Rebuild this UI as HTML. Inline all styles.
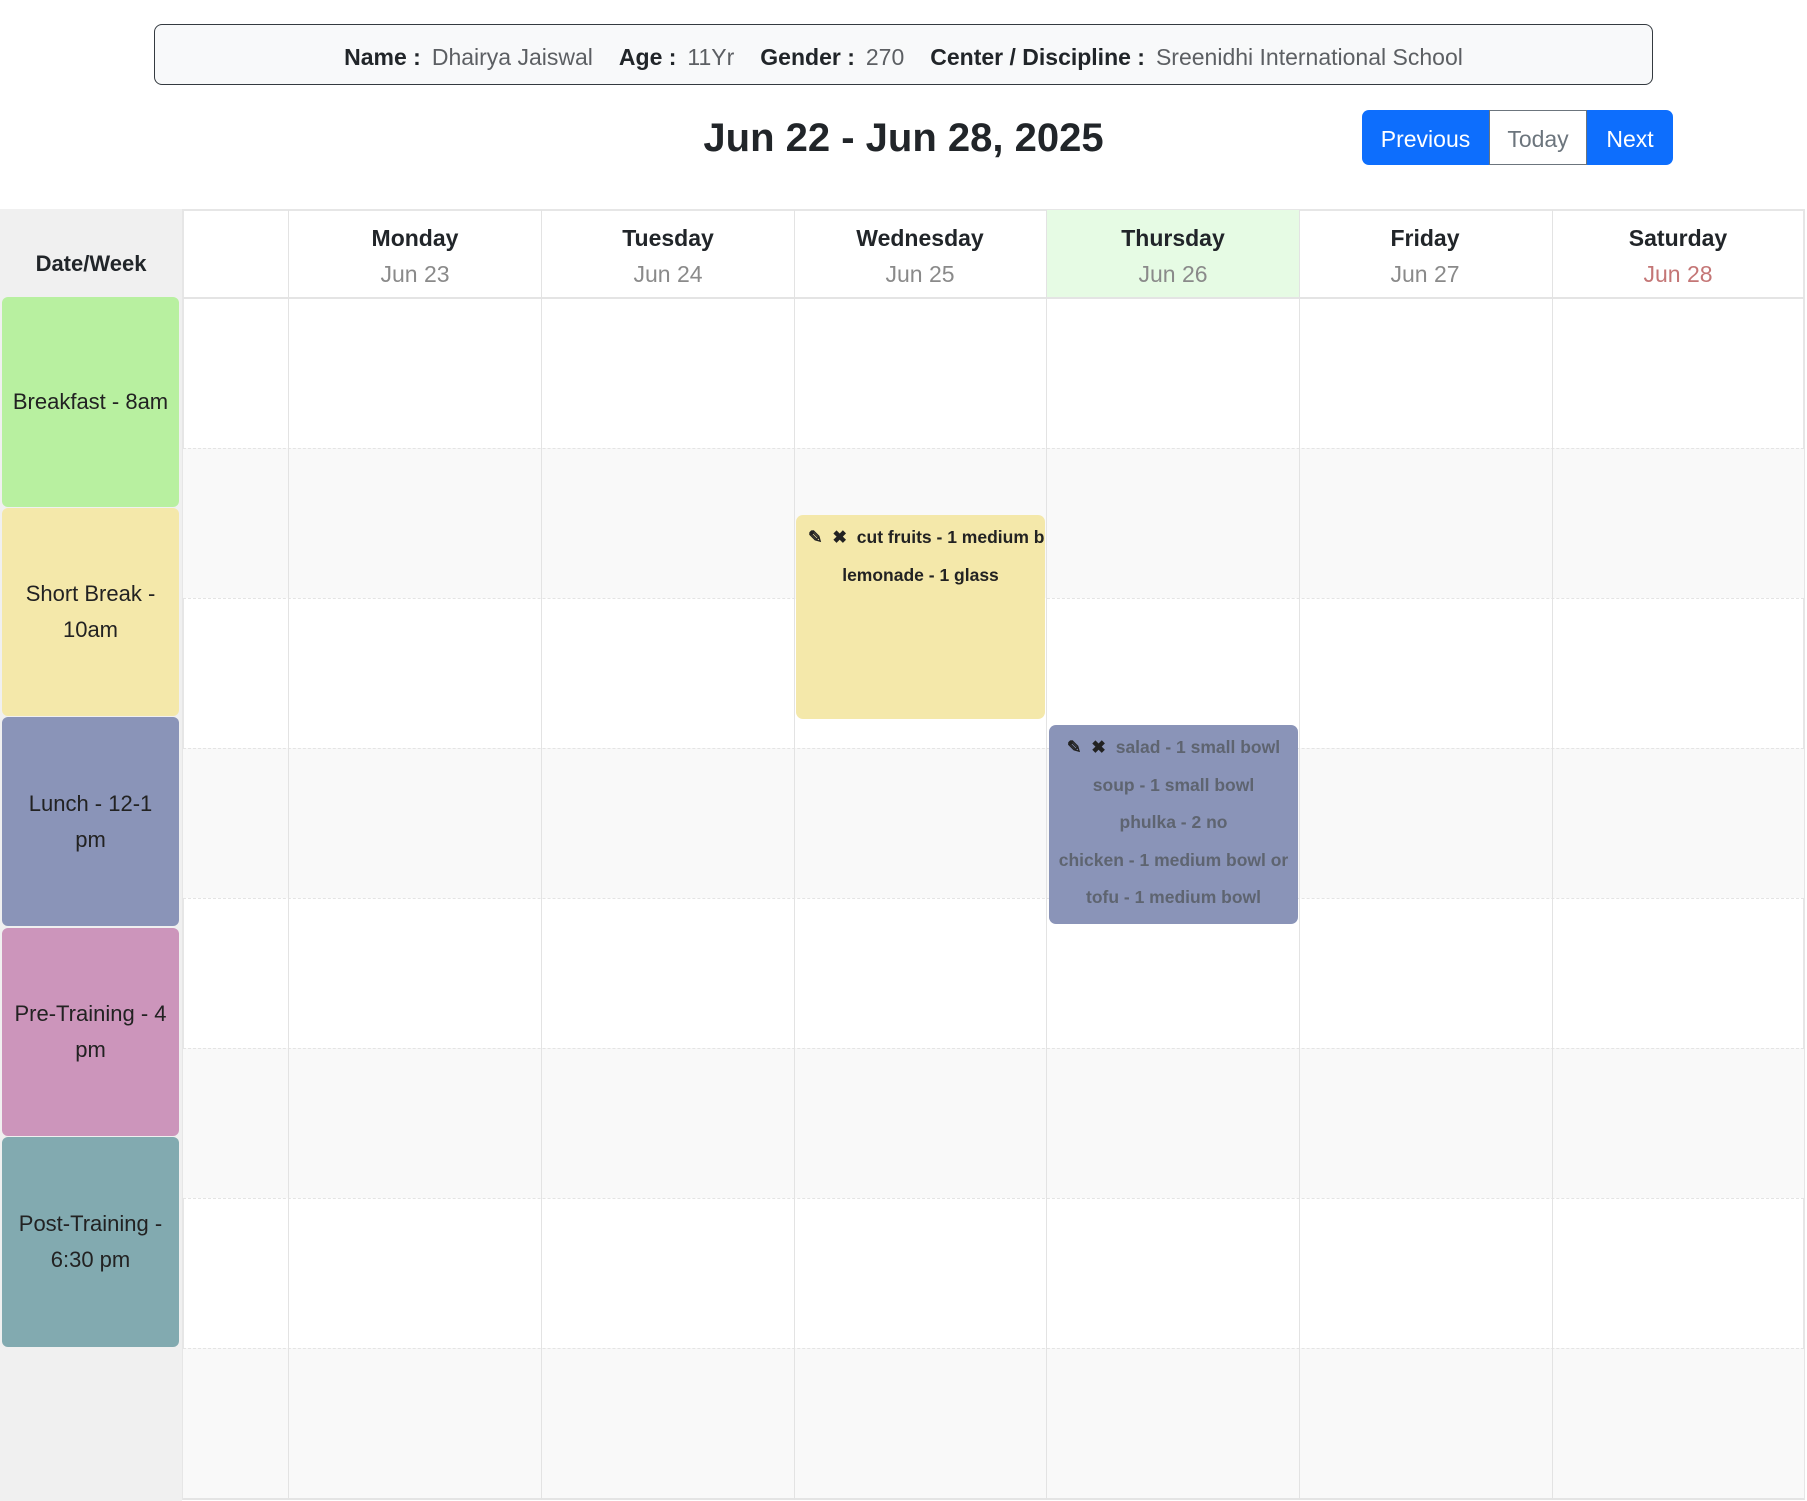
<!DOCTYPE html>
<html><head><meta charset="utf-8"><style>
*{box-sizing:border-box;margin:0;padding:0}
body{width:1807px;height:1501px;background:#fff;font-family:"Liberation Sans",sans-serif;color:#212529;position:relative;overflow:hidden}
.abs{position:absolute}
.info{left:154px;top:24px;width:1499px;height:61px;border:1.5px solid #343a40;border-radius:8px;background:#f8f9fa;display:flex;align-items:center;justify-content:center;font-size:23px;white-space:nowrap;padding-top:5px}
.info b{font-weight:600;color:#212529;margin-left:26px}
.info b:first-child{margin-left:0}
.info span{color:#5c5f63;margin-left:11px}
.title{left:0;width:1807px;top:116px;text-align:center;font-size:40px;font-weight:600;color:#212529}
.btn{top:110px;height:55px;font-size:23px;display:flex;align-items:center;justify-content:center;color:#fff;background:#0d6efd;padding-top:4px}
.col{left:0;top:209px;width:182px;height:1292px;background:#f0f0f0}
.grid{left:182px;top:209px;width:1623px;height:1291px;border:2px solid #e6e6e6;border-bottom:2px solid #e4e4e4}
.vl{top:210px;width:1px;height:1290px;background:#e3e3e3}
.row{left:183px;width:1621px;height:150px;border-top:1px dashed #e4e4e4}
.gray{background:#f9f9f9}
.hd{top:210px;height:88px;width:252px;text-align:center}
.hd .d{font-weight:bold;font-size:23px;margin-top:15px}
.hd .t{font-size:23px;color:#8a8a8a;margin-top:9px}
.lab{left:2px;width:177px;border-radius:6px;display:flex;align-items:center;justify-content:center;text-align:center;font-size:22px;line-height:36px;color:#222;padding:0 4px}
.ev{border-radius:7px;font-size:17.5px;font-weight:bold;text-align:center;overflow:hidden;white-space:nowrap}
.ev div{height:37.5px;line-height:38px}
</style></head><body>
<div class="abs info"><b>Name :</b><span>Dhairya Jaiswal</span><b>Age :</b><span>11Yr</span><b>Gender :</b><span>270</span><b>Center / Discipline :</b><span>Sreenidhi International School</span></div>
<div class="abs title">Jun 22 - Jun 28, 2025</div>
<div class="abs btn" style="left:1362px;width:127px;border-radius:7px 0 0 7px">Previous</div>
<div class="abs btn" style="left:1489px;width:98px;background:#fff;color:#6c757d;border:1px solid #6c757d">Today</div>
<div class="abs btn" style="left:1587px;width:86px;border-radius:0 7px 7px 0">Next</div>

<div class="abs col"></div>
<div class="abs grid"></div>
<div class="abs" style="left:1046px;top:210px;width:253px;height:88px;background:#e6fbe4"></div>
<div class="abs" style="left:183px;top:297px;width:1621px;height:2px;background:#e4e4e4"></div>
<div class="abs row" style="top:298px;border-top:none"></div>
<div class="abs row gray" style="top:448px"></div>
<div class="abs row" style="top:598px"></div>
<div class="abs row gray" style="top:748px"></div>
<div class="abs row" style="top:898px"></div>
<div class="abs row gray" style="top:1048px"></div>
<div class="abs row" style="top:1198px"></div>
<div class="abs row gray" style="top:1348px;height:150px"></div>
<div class="abs vl" style="left:288px"></div>
<div class="abs vl" style="left:541px"></div>
<div class="abs vl" style="left:794px"></div>
<div class="abs vl" style="left:1046px"></div>
<div class="abs vl" style="left:1299px"></div>
<div class="abs vl" style="left:1552px"></div>

<div class="abs hd" style="left:289px"><div class="d">Monday</div><div class="t">Jun 23</div></div>
<div class="abs hd" style="left:542px"><div class="d">Tuesday</div><div class="t">Jun 24</div></div>
<div class="abs hd" style="left:794px"><div class="d">Wednesday</div><div class="t">Jun 25</div></div>
<div class="abs hd" style="left:1047px"><div class="d">Thursday</div><div class="t">Jun 26</div></div>
<div class="abs hd" style="left:1299px"><div class="d">Friday</div><div class="t">Jun 27</div></div>
<div class="abs hd" style="left:1552px"><div class="d">Saturday</div><div class="t" style="color:#c47676">Jun 28</div></div>

<div class="abs" style="left:0;top:251px;width:182px;text-align:center;font-weight:bold;font-size:22px">Date/Week</div>
<div class="abs lab" style="top:297px;height:210px;background:#b8f0a0">Breakfast - 8am</div>
<div class="abs lab" style="top:508px;height:208px;background:#f4e8aa">Short Break -<br>10am</div>
<div class="abs lab" style="top:717px;height:209px;background:#8a94b8">Lunch - 12-1<br>pm</div>
<div class="abs lab" style="top:928px;height:208px;background:#cc95bb">Pre-Training - 4<br>pm</div>
<div class="abs lab" style="top:1137px;height:210px;background:#82aab0">Post-Training -<br>6:30 pm</div>

<div class="abs ev" style="left:796px;top:515px;width:249px;height:204px;background:#f4e8aa;color:#222;padding-top:3px">
<div style="text-align:left;padding-left:12px">✎&nbsp; ✖&nbsp; cut fruits - 1 medium bowl</div>
<div>lemonade - 1 glass</div></div>
<div class="abs ev" style="left:1049px;top:725px;width:249px;height:199px;background:#8a94b8;color:#5e6470;padding-top:3px">
<div><span style="color:#222">✎&nbsp; ✖</span>&nbsp; salad - 1 small bowl</div>
<div>soup - 1 small bowl</div>
<div>phulka - 2 no</div>
<div>chicken - 1 medium bowl or</div>
<div>tofu - 1 medium bowl</div></div>
</body></html>
